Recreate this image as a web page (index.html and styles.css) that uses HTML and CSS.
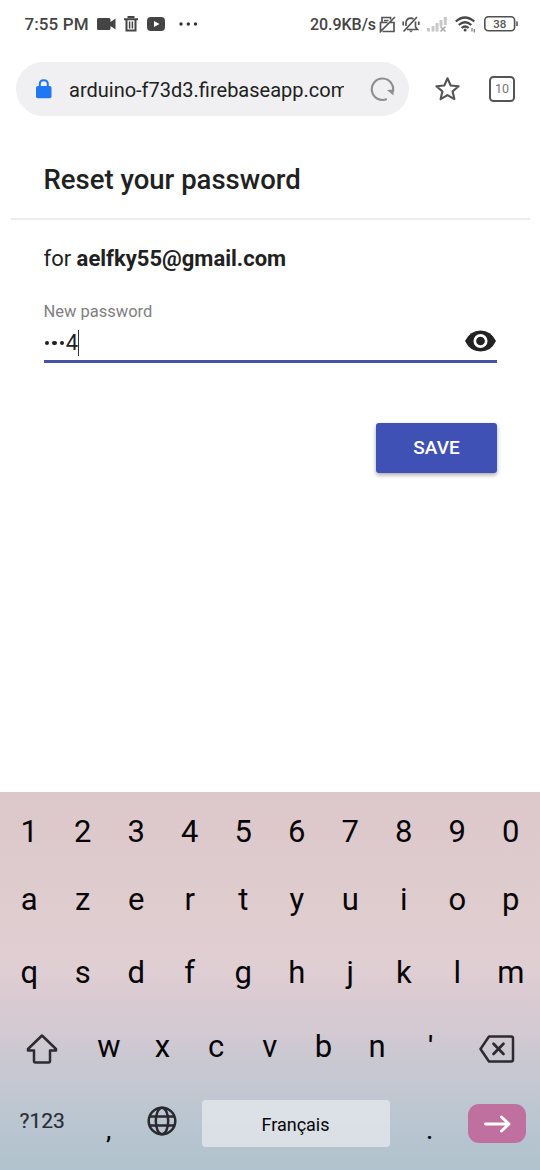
FILE: index.html
```html
<!DOCTYPE html>
<html lang="en">
<head>
<meta charset="utf-8">
<title>Reset your password</title>
<link rel="stylesheet" href="styles.css">
</head>
<body>
<div class="screen">
  <header class="status">
    <span class="clock">7:55 PM</span>
    <svg class="st-cam" width="19" height="14" viewBox="0 0 19 14"><path fill="#444" d="M1.500 1h10.500q1.500 0 1.500 1.500v2.500l5-3.500v11l-5-3.500v2.500q0 1.500-1.500 1.500H1.500Q0 13 0 11.500v-9Q0 1 1.500 1z"/></svg>
    <svg class="st-bin" width="14" height="16" viewBox="0 0 14 16"><path fill="none" stroke="#444" stroke-width="2" d="M0 3.200h14M4.500 2V1h5v1M2.500 3.500v11h9v-11"/><path stroke="#444" stroke-width="1.500" d="M5.600 5.500v7M8.400 5.500v7"/></svg>
    <svg class="st-tube" width="18" height="14" viewBox="0 0 18 14"><rect width="18" height="14" rx="4" fill="#444"/><path d="M7 4l5.500 3L7 10z" fill="#fff"/></svg>
    <svg class="st-dots" width="19" height="4" viewBox="0 0 19 4"><g fill="#333"><circle cx="2" cy="2" r="1.700"/><circle cx="9.300" cy="2" r="1.700"/><circle cx="16.500" cy="2" r="1.700"/></g></svg>
    <span class="rate">20.9KB/s</span>
    <svg class="st-card" width="17" height="17" viewBox="0 0 17 17"><path fill="none" stroke="#555" stroke-width="1.700" d="M3 6V1.500h8.500v2M5 4.500h4.500M1 6.500h7.500M1.500 6v9.500L16 1M3.500 15.500H15v-9h-4"/></svg>
    <svg class="st-bell" width="18" height="17" viewBox="0 0 18 17"><path fill="none" stroke="#555" stroke-width="1.700" d="M1.500 15.500L15 1M4 10V6.500Q4.500 2.300 9 2.200q1.500 0 2.500.8M13.500 5.500v5.500l2 2.500H5M1.200 5.500v4M16.800 5.500v3.500"/><path d="M7 14.500h4l-2 2z" fill="#555"/></svg>
    <svg class="st-signal" width="21" height="15" viewBox="0 0 21 15"><g fill="#c8c8c8"><rect y="11" width="3" height="3.500"/><rect x="4.500" y="9" width="3" height="5.500"/><rect x="8.500" y="6" width="3" height="8.500"/><rect x="12.500" y="3" width="3" height="6"/><rect x="16.800" width="3" height="8"/></g><path d="M13.500 9.500l5 5m0-5l-5 5" stroke="#aaa" stroke-width="1.500"/></svg>
    <svg class="st-wifi" width="22" height="17" viewBox="0 0 22 17"><g fill="none" stroke="#484848" stroke-width="2.200"><path d="M.8 5.500q9-8 18.500 0M3.800 9q6.200-5.500 12.500 0M6.600 12q3.500-3 7 0"/></g><circle cx="10.100" cy="14" r="1.500" fill="#484848"/><path d="M17 12v3.500M19.300 13v3.500" stroke="#777" stroke-width="1.200"/></svg>
    <svg class="st-batt" width="35" height="16" viewBox="0 0 35 16"><rect x=".8" y=".8" width="29.800" height="13.900" rx="3.500" fill="#fff" stroke="#505050" stroke-width="1.600"/><path d="M33 5.500v4.500" stroke="#505050" stroke-width="1.600"/><text x="15.700" y="11.900" class="batt-text">38</text></svg>
  </header>

  <nav class="browser">
    <div class="omnibox">
      <svg class="lock" width="16" height="20" viewBox="0 0 16 20"><rect y="7" width="15.500" height="12.200" rx="1.800" fill="#1f78f3"/><path d="M3.800 8V5q0-3.800 4-3.800t4 3.800v3" fill="none" stroke="#1f78f3" stroke-width="2"/></svg>
      <span class="url">arduino-f73d3.firebaseapp.com</span>
      <svg class="reload" width="26" height="26" viewBox="0 0 26 26"><path d="M16.800 23A10.700 10.700 0 1 1 22.800 16" fill="none" stroke="#8e8e91" stroke-width="2.100"/><path d="M17 14l6.500 5.500V13.500" fill="#8e8e91"/></svg>
    </div>
    <svg class="star" width="27" height="26" viewBox="0 0 27 26"><path d="M13.500 2.300l3.200 7.200 7.900.7-6 5.200 1.800 7.700-6.900-4-6.900 4 1.800-7.700-6-5.200 7.900-.7z" fill="none" stroke="#555" stroke-width="2.100" stroke-linejoin="round"/></svg>
    <span class="tabs">10</span>
  </nav>

  <main class="page">
    <h1 class="title">Reset your password</h1>
    <form class="form">
      <p class="account">for <b>aelfky55@gmail.com</b></p>
      <label class="label">New password</label>
      <div class="field">
        <span class="dots"><i></i><i></i><i></i></span><span class="digit">4</span><span class="caret"></span>
        <svg class="eye" width="31" height="22" viewBox="0 0 31 22"><path d="M0 11Q5 .5 15.500.5T31 11Q26 21.500 15.500 21.500T0 11z" fill="#222"/><circle cx="15.500" cy="11" r="5.700" fill="#222" stroke="#fff" stroke-width="2.700"/></svg>
      </div>
      <button class="save" type="button">SAVE</button>
    </form>
  </main>

  <section class="keyboard">
    <div class="row r1"><span>1</span><span>2</span><span>3</span><span>4</span><span>5</span><span>6</span><span>7</span><span>8</span><span>9</span><span>0</span></div>
    <div class="row r2"><span>a</span><span>z</span><span>e</span><span>r</span><span>t</span><span>y</span><span>u</span><span>i</span><span>o</span><span>p</span></div>
    <div class="row r3"><span>q</span><span>s</span><span>d</span><span>f</span><span>g</span><span>h</span><span>j</span><span>k</span><span>l</span><span>m</span></div>
    <div class="row r4">
      <span class="icon-key"><svg width="32" height="30" viewBox="0 0 32 30"><path d="M16 1.500L30 15v1.500h-6V27q0 1.500-1.500 1.500h-13Q8 28.500 8 27V16.500H2V15z" fill="none" stroke="#2c2b30" stroke-width="2.500" stroke-linejoin="round"/></svg></span>
      <span>w</span><span>x</span><span>c</span><span>v</span><span>b</span><span>n</span><span class="quote">'</span>
      <span class="icon-key"><svg width="36" height="28" viewBox="0 0 36 28"><path d="M10 1.500h22q2 0 2 2v21q0 2-2 2H10L1.500 14z" fill="none" stroke="#2c2b30" stroke-width="2.500" stroke-linejoin="round"/><path d="M14.500 8.700L24.500 19M24.500 8.700L14.500 19" stroke="#2c2b30" stroke-width="2.700" stroke-linecap="round"/></svg></span>
    </div>
    <div class="row r5">
      <span class="sym">?123</span>
      <span class="punct">,</span>
      <span class="globe"><svg width="30" height="30" viewBox="0 0 30 30"><g fill="none" stroke="#29292f" stroke-width="2.500"><circle cx="15" cy="15" r="13.300"/><ellipse cx="15" cy="15" rx="6.200" ry="13.300"/><path d="M2.500 10.500h25M2.500 19.500h25"/></g></svg></span>
      <span class="space">Français</span>
      <span class="punct">.</span>
      <span class="enter"><svg width="27" height="18" viewBox="0 0 27 18"><path d="M1.500 9h23M17.500 2l7.500 7-7.500 7" fill="none" stroke="#fff" stroke-width="2.900" stroke-linecap="round" stroke-linejoin="round"/></svg></span>
    </div>
  </section>
</div>
</body>
</html>
```
FILE: styles.css
```css
* { box-sizing: border-box; }
body { margin: 0; background: #fff; font-family: Roboto, "Liberation Sans", sans-serif; color: #212121; }
.screen { width: 540px; height: 1170px; display: flex; flex-direction: column; overflow: hidden; }
svg { display: block; flex: none; }

.status { height: 48px; padding-left: 24.500px; display: flex; align-items: center; color: #444; font-weight: 500; font-size: 17px; white-space: nowrap; }
.clock { width: 72px; letter-spacing: .1px; }
.st-bin { margin-left: 8.500px; margin-top: -1px; }
.st-tube { margin-left: 9px; }
.st-dots { margin-left: 14px; }
.rate { margin-left: 112px; width: 69px; font-size: 16px; letter-spacing: -.05px; }
.st-card { margin-left: 0; }
.st-bell { margin-left: 6px; }
.st-signal { margin-left: 7px; }
.st-wifi { margin-left: 7px; }
.st-batt { margin-left: 7px; }
.batt-text { font: 500 11.500px Roboto, sans-serif; fill: #555; text-anchor: middle; }

.browser { height: 82px; padding: 14px 0 14px 16px; display: flex; align-items: center; }
.omnibox { width: 393px; height: 54px; border-radius: 27px; background: #f0f0f2; display: flex; align-items: center; padding-left: 20px; }
.url { margin-left: 17px; width: 275px; padding-top: 1px; overflow: hidden; white-space: nowrap; font-size: 20px; line-height: 30px; }
.reload { margin-left: 26px; margin-top: -1px; }
.star { margin-left: 25px; }
.tabs { margin-left: 28px; margin-top: -1px; width: 26px; height: 26px; border: 2px solid #555; border-radius: 4.500px; font-size: 12.500px; line-height: 21px; text-align: center; color: #777; }

.page { flex: none; height: 662px; }
.title { margin: 0 10px 0 11px; height: 90px; padding: 32px 32.500px 0; border-bottom: 2px solid #ececec; font-size: 27.500px; line-height: 36px; font-weight: 500; white-space: nowrap; }
.form { padding: 24px 43px 0 43.500px; display: flex; flex-direction: column; }
.account { margin: 0; font-size: 22px; line-height: 30px; }
.account b { font-weight: 700; }
.label { margin-top: 28px; font-size: 16.500px; line-height: 20px; color: #808080; }
.field { height: 41px; border-bottom: 3px solid #4552ad; display: flex; align-items: center; }
.dots { display: flex; gap: 2.800px; margin-left: 1px; margin-top: 4px; }
.dots i { width: 4.800px; height: 4.800px; border-radius: 50%; background: #212121; }
.digit { margin-left: 1.200px; padding-top: 4px; font-size: 22px; line-height: 26px; }
.caret { width: 1px; height: 26px; margin-top: 4px; background: #333; }
.eye { margin-left: auto; margin-right: 1px; }
.save { align-self: flex-end; margin-top: 60px; padding: 0 0 2px; width: 121px; height: 50px; border: 0; border-radius: 3px; background: #4051b5; color: #fff; font: 500 19px Roboto, sans-serif; box-shadow: 0 2px 4px rgba(0, 0, 0, .35); }

.keyboard { height: 378px; padding: 4px 2.500px 0 2.500px; display: flex; flex-direction: column; color: #080608; background: linear-gradient(#dcc8ca 0, #e0cdd0 130px, #dfced3 180px, #d8cad2 215px, #d5cad2 235px, #cac8d1 265px, #c4c7d2 295px, #bdc7d1 315px, #b6c4cf 350px, #b1c3ce 378px); }
.row { display: grid; grid-template-columns: repeat(10, 1fr); align-items: center; justify-items: center; font-size: 31px; line-height: 36px; }
.r1 { height: 71px; }
.r2 { height: 65px; }
.r3 { height: 81px; }
.r4 { height: 67px; grid-template-columns: 79.500px repeat(7, 1fr) 80px; }
.icon-key { padding-top: 4px; }
.quote { font-size: 28px; font-weight: 500; }
.r5 { height: 90px; grid-template-columns: 79.500px 53.500px 53px 214px 54px 1fr; }
.sym { font-size: 21px; color: #2a2d35; padding-bottom: 8px; -webkit-text-stroke: .2px #2a2d35; }
.punct { font-size: 24px; font-weight: 500; padding-top: 11px; }
.globe { padding-bottom: 9px; }
.space { width: 188px; height: 47px; border-radius: 4px; background: rgba(235, 238, 240, .68); font-size: 18px; line-height: 49px; text-align: center; margin-bottom: 3px; }
.enter { width: 58px; height: 39px; border-radius: 11px; background: #bf709f; display: flex; align-items: center; justify-content: center; margin-bottom: 3px; }
```
